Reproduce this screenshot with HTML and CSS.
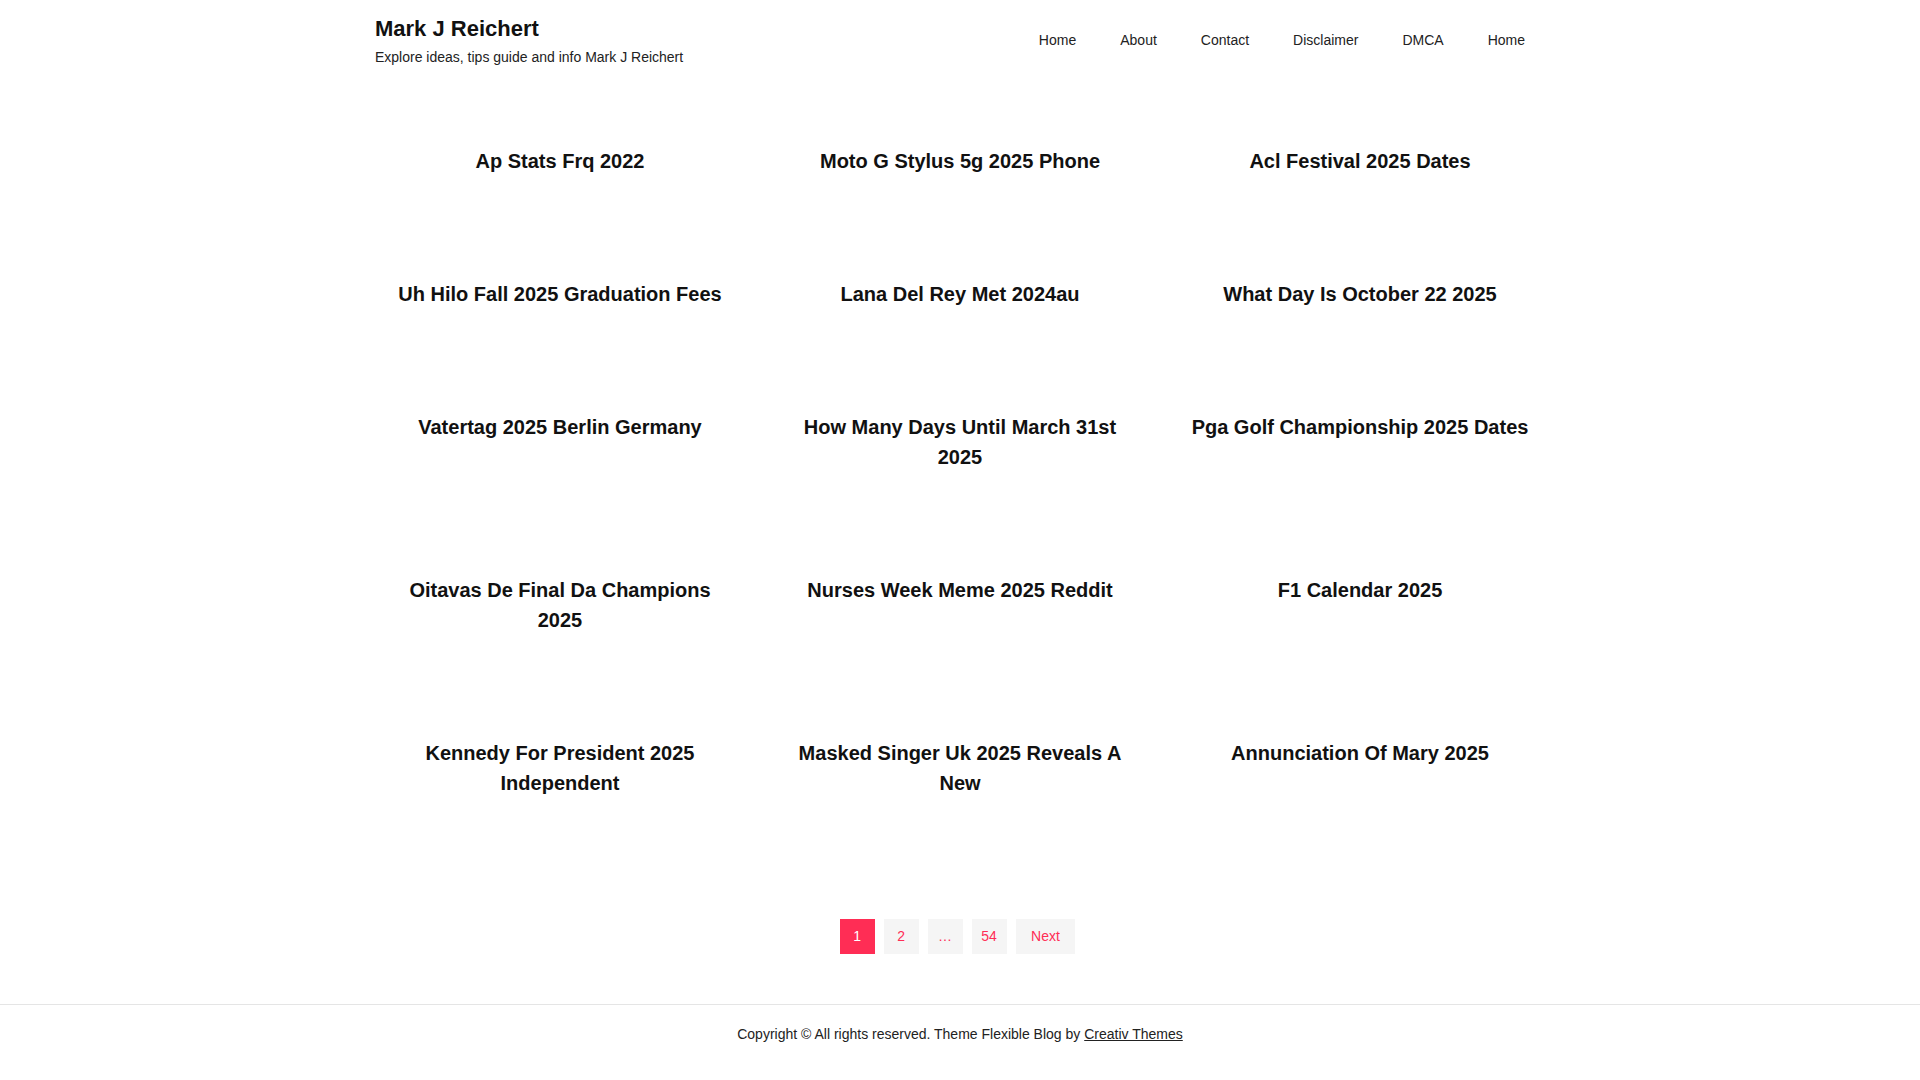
FILE: index.html
```html
<!DOCTYPE html>
<html lang="en">
<head>
<meta charset="utf-8">
<title>Mark J Reichert</title>
<link rel="stylesheet" href="styles.css">
</head>
<body>
<header class="site-header">
  <div class="container header-inner">
    <div class="branding">
      <p class="site-title"><a href="#">Mark J Reichert</a></p>
      <p class="site-description">Explore ideas, tips guide and info Mark J Reichert</p>
    </div>
    <nav class="main-nav">
      <ul class="menu">
        <li><a href="#">Home</a></li>
        <li><a href="#">About</a></li>
        <li><a href="#">Contact</a></li>
        <li><a href="#">Disclaimer</a></li>
        <li><a href="#">DMCA</a></li>
        <li><a href="#">Home</a></li>
      </ul>
    </nav>
  </div>
</header>

<main class="site-main">
  <div class="container">
    <div class="post-grid">
      <article class="post-card"><h2 class="post-title"><a href="#">Ap Stats Frq 2022</a></h2></article>
      <article class="post-card"><h2 class="post-title"><a href="#">Moto G Stylus 5g 2025 Phone</a></h2></article>
      <article class="post-card"><h2 class="post-title"><a href="#">Acl Festival 2025 Dates</a></h2></article>
      <article class="post-card"><h2 class="post-title"><a href="#">Uh Hilo Fall 2025 Graduation Fees</a></h2></article>
      <article class="post-card"><h2 class="post-title"><a href="#">Lana Del Rey Met 2024au</a></h2></article>
      <article class="post-card"><h2 class="post-title"><a href="#">What Day Is October 22 2025</a></h2></article>
      <article class="post-card"><h2 class="post-title"><a href="#">Vatertag 2025 Berlin Germany</a></h2></article>
      <article class="post-card"><h2 class="post-title"><a href="#">How Many Days Until March 31st 2025</a></h2></article>
      <article class="post-card"><h2 class="post-title"><a href="#">Pga Golf Championship 2025 Dates</a></h2></article>
      <article class="post-card"><h2 class="post-title"><a href="#">Oitavas De Final Da Champions 2025</a></h2></article>
      <article class="post-card"><h2 class="post-title"><a href="#">Nurses Week Meme 2025 Reddit</a></h2></article>
      <article class="post-card"><h2 class="post-title"><a href="#">F1 Calendar 2025</a></h2></article>
      <article class="post-card"><h2 class="post-title"><a href="#">Kennedy For President 2025 Independent</a></h2></article>
      <article class="post-card"><h2 class="post-title"><a href="#">Masked Singer Uk 2025 Reveals A New</a></h2></article>
      <article class="post-card"><h2 class="post-title"><a href="#">Annunciation Of Mary 2025</a></h2></article>
    </div>

    <nav class="pagination">
      <span class="page current">1</span>
      <a class="page" href="#">2</a>
      <span class="page dots">…</span>
      <a class="page" href="#">54</a>
      <a class="page next" href="#">Next</a>
    </nav>
  </div>
</main>

<footer class="site-footer">
  <p class="site-info">Copyright © All rights reserved. Theme Flexible Blog by <a href="#">Creativ Themes</a></p>
</footer>
</body>
</html>
```

FILE: styles.css
```css
* {
  box-sizing: border-box;
}

html, body {
  margin: 0;
  padding: 0;
  background: #ffffff;
}

body {
  font-family: "Liberation Sans", Arial, sans-serif;
  font-size: 14px;
  line-height: 20px;
  color: #222222;
}

a {
  color: inherit;
  text-decoration: none;
}

.container {
  width: 1170px;
  margin: 0 auto;
}

/* Header */
.site-header {
  padding-top: 13px;
}

.header-inner {
  display: flex;
  justify-content: space-between;
  align-items: center;
}

.site-title {
  margin: 1px 0 0;
  font-size: 22px;
  line-height: 30px;
  font-weight: 700;
  color: #111111;
}

.site-description {
  margin: 3px 0 0;
  font-size: 14px;
  line-height: 20px;
  color: #222222;
}

.menu {
  list-style: none;
  margin: 0;
  padding: 0;
  display: flex;
  gap: 4px;
}

.menu a {
  display: block;
  padding: 0 20px;
  font-size: 14px;
  line-height: 20px;
  color: #222222;
}

/* Posts */
.site-main {
  padding-top: 44px;
}

.post-grid {
  display: grid;
  grid-template-columns: repeat(3, 370px);
  column-gap: 30px;
  row-gap: 30px;
}

.post-card {
  padding: 35px 15px 38px;
  text-align: center;
}

.post-title {
  margin: 0;
  font-size: 20px;
  line-height: 30px;
  font-weight: 700;
  color: #111111;
}

/* Pagination */
.pagination {
  margin-top: 83px;
  padding-right: 5px;
  display: flex;
  justify-content: center;
  gap: 9px;
}

.page {
  display: block;
  width: 35px;
  height: 35px;
  line-height: 35px;
  text-align: center;
  font-size: 14px;
  background: #f5f5f5;
  color: #ff2d55;
}

.page.next {
  width: auto;
  padding: 0 15.5px;
}

.page.current {
  background: #ff2d55;
  color: #ffffff;
}

/* Footer */
.site-footer {
  margin-top: 50px;
  border-top: 1px solid #e5e5e5;
  padding-top: 19px;
  text-align: center;
}

.site-info {
  margin: 0;
  font-size: 14px;
  line-height: 20px;
  color: #222222;
}

.site-info a {
  text-decoration: underline;
}
```
